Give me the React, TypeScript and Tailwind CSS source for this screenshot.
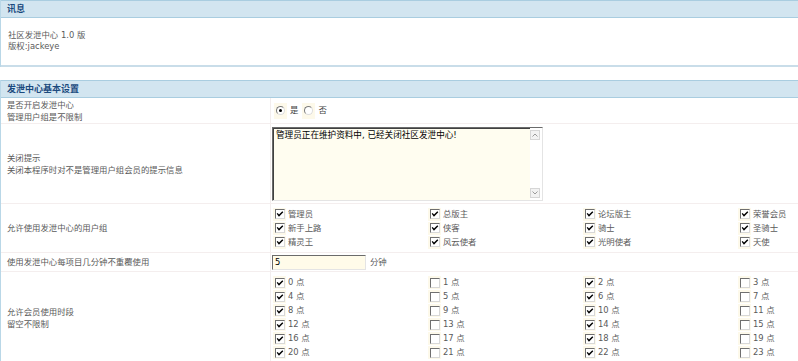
import React from 'react'

const groups = ['管理员', '总版主', '论坛版主', '荣誉会员', '新手上路', '侠客', '骑士', '圣骑士', '精灵王', '风云使者', '光明使者', '天使']
const hours = Array.from({ length: 24 }, (_, i) => i)

function Box({ checked }: { checked: boolean }) {
  return (
    <span className="flex h-[13px] w-[13px] shrink-0 items-center justify-center bg-[#fdf9ea]">
      <span className="flex h-[10px] w-[10px] items-center justify-center border border-t-[#6f6f6f] border-l-[#6f6f6f] border-b-[#d8d8d8] border-r-[#d8d8d8] bg-white">
        {checked && (
          <svg width="8" height="8" viewBox="0 0 8 8">
            <path d="M1.2 3.4 L3 5.6 L6.8 1.8" fill="none" stroke="#000" strokeWidth="1.4" />
          </svg>
        )}
      </span>
    </span>
  )
}

function Radio({ checked }: { checked: boolean }) {
  return (
    <span className="flex h-[16px] w-[13px] items-center justify-center bg-[#fdf9ea]">
      <span className="flex h-[9px] w-[9px] items-center justify-center rounded-full border border-t-[#7b7b7b] border-l-[#7b7b7b] border-b-[#dcdcdc] border-r-[#dcdcdc] bg-white">
        {checked && <span className="h-[3px] w-[3px] rounded-full bg-black" />}
      </span>
    </span>
  )
}

function Row({ label, h, children }: { label: React.ReactNode; h: string; children: React.ReactNode }) {
  return (
    <div className={`grid grid-cols-[270px_1fr] border-b border-[#f4eeee] ${h}`}>
      <div className="flex flex-col justify-center border-r border-[#f2eded] pl-[6px] leading-[12px] text-[#5a5a5a]">{label}</div>
      <div className="flex flex-col justify-center">{children}</div>
    </div>
  )
}

function Header({ title }: { title: string }) {
  return (
    <div className="h-[18px] border-y border-[#a9cde0] bg-[#d2e5f0] pl-[6px] text-[9px] font-bold leading-[16px] text-[#1a4a7e]">
      {title}
    </div>
  )
}

export default function App() {
  return (
    <div className="h-[361px] w-[798px] overflow-hidden bg-white font-['DejaVu_Sans','Noto_Sans_CJK_SC',sans-serif] text-[8.4px]">
      <div className="border-l border-[#b9d7e7]">
        <Header title="讯息" />
        <div className="h-[47px] pl-[7px] pt-[12px] leading-[11px] text-[#5a5a5a]">
          <div>社区发泄中心 1.0 版</div>
          <div>版权:jackeye</div>
        </div>
        <div className="h-[2px] bg-[#c9dde9]" />
      </div>

      <div className="h-[13px]" />

      <div className="border-l border-[#b9d7e7]">
        <Header title="发泄中心基本设置" />

        <Row h="h-[26px]" label={<><div>是否开启发泄中心</div><div>管理用户组是不限制</div></>}>
          <div className="flex items-center pl-[3px] text-[#444]">
            <Radio checked />
            <span className="ml-[3px] mr-[4px]">是</span>
            <Radio checked={false} />
            <span className="ml-[3px]">否</span>
          </div>
        </Row>

        <Row h="h-[80px]" label={<><div>关闭提示</div><div>关闭本程序时对不是管理用户组会员的提示信息</div></>}>
          <div className="ml-[1px] flex h-[74px] w-[271px] border border-t-[#6b6b6b] border-l-[#6b6b6b] border-b-[#e4e4e4] border-r-[#e4e4e4] bg-[#fffdf0]">
            <div className="flex-1 border-t border-l border-[#404040] pl-[2px] pt-[1px] text-[8.6px] leading-[11px] text-black">
              管理员正在维护资料中, 已经关闭社区发泄中心!
            </div>
            <div className="flex w-[12px] flex-col justify-between bg-white py-[2px] pr-[1px]">
              <span className="flex h-[10px] w-[10px] items-center justify-center border border-[#d6d6d6] bg-[#f2f2f2]">
                <svg width="6" height="4" viewBox="0 0 6 4"><path d="M0.5 3.5 L3 1 L5.5 3.5" fill="none" stroke="#9a9a9a" /></svg>
              </span>
              <span className="flex h-[10px] w-[10px] items-center justify-center border border-[#d6d6d6] bg-[#f2f2f2]">
                <svg width="6" height="4" viewBox="0 0 6 4"><path d="M0.5 0.5 L3 3 L5.5 0.5" fill="none" stroke="#9a9a9a" /></svg>
              </span>
            </div>
          </div>
        </Row>

        <Row h="h-[49px]" label="允许使用发泄中心的用户组">
          <div className="grid grid-cols-[155px_155px_155px_155px] pl-[2px] text-[#5a5a5a]">
            {groups.map((g) => (
              <div key={g} className="flex h-[14px] items-center gap-[2px]">
                <Box checked />
                <span>{g}</span>
              </div>
            ))}
          </div>
        </Row>

        <Row h="h-[19px]" label="使用发泄中心每项目几分钟不重覆使用">
          <div className="flex items-center pl-[1px] text-[#5a5a5a]">
            <div className="h-[15px] w-[94px] border border-t-[#6b6b6b] border-l-[#6b6b6b] border-b-[#e4e4e4] border-r-[#e4e4e4] bg-[#fffbe9] pl-[2px] leading-[13px] text-black">
              5
            </div>
            <span className="ml-[4px]">分钟</span>
          </div>
        </Row>

        <Row h="h-[92px]" label={<><div>允许会员使用时段</div><div>留空不限制</div></>}>
          <div className="grid grid-cols-[155px_155px_155px_155px] pl-[2px] text-[#5a5a5a]">
            {hours.map((n) => (
              <div key={n} className="flex h-[14px] items-center gap-[2px]">
                <Box checked={n % 2 === 0} />
                <span>{n} 点</span>
              </div>
            ))}
          </div>
        </Row>
      </div>
    </div>
  )
}
